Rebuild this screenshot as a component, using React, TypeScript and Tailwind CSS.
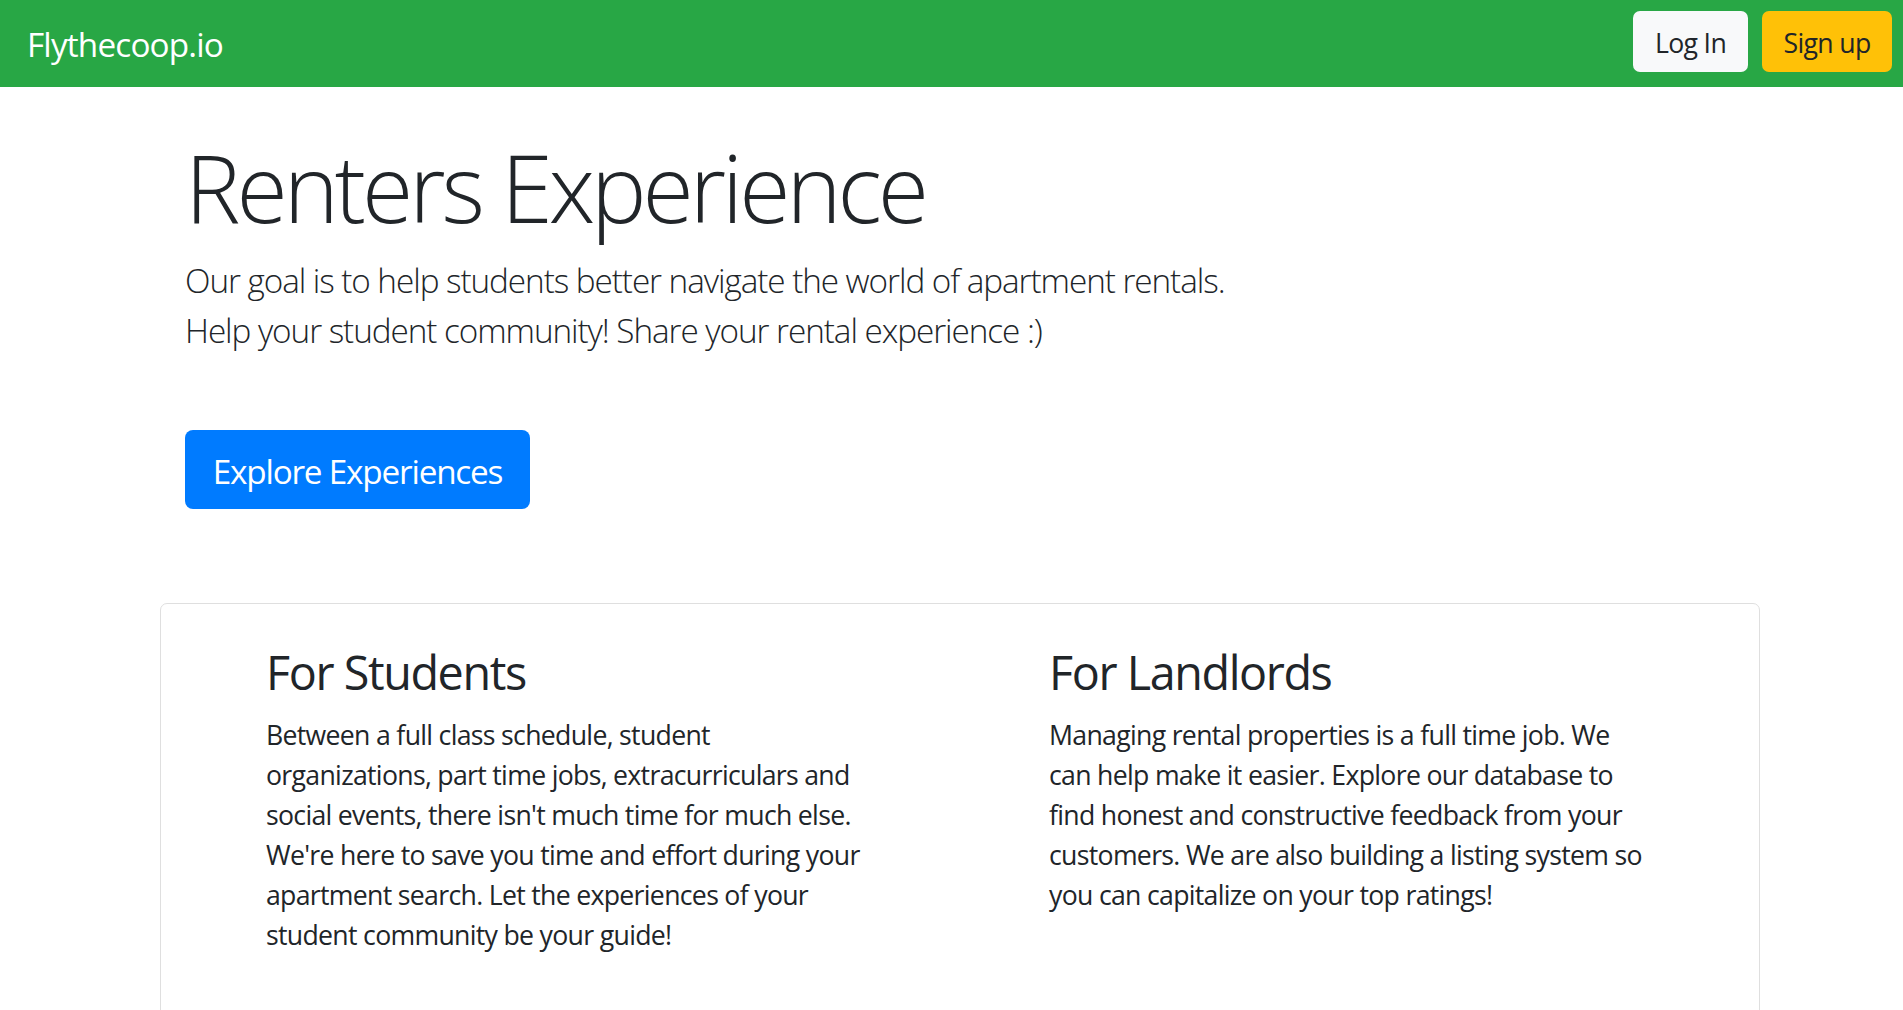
import React from 'react'

// Card copy, one entry per rendered line so wrapping matches the screenshot
const studentLines = [
  'Between a full class schedule, student',
  'organizations, part time jobs, extracurriculars and',
  "social events, there isn't much time for much else.",
  "We're here to save you time and effort during your",
  'apartment search. Let the experiences of your',
  'student community be your guide!',
]

const landlordLines = [
  'Managing rental properties is a full time job. We',
  'can help make it easier. Explore our database to',
  'find honest and constructive feedback from your',
  'customers. We are also building a listing system so',
  'you can capitalize on your top ratings!',
]

function Navbar() {
  return (
    <nav className="flex h-[87px] items-start justify-between bg-[#28a745] pl-[27px] pr-[11px]">
      <a href="#" className="self-center text-[33.3px] leading-[50px] tracking-[-0.025em] text-white">
        Flythecoop.io
      </a>
      <div className="flex gap-[14px] pt-[11px]">
        <button className="flex h-[61px] w-[115px] items-center justify-center rounded-[7px] bg-[#f8f9fa] pt-[3px] text-[26.67px] leading-[40px] tracking-[-0.025em] text-[#212529]">
          Log In
        </button>
        <button className="flex h-[61px] w-[130px] items-center justify-center rounded-[7px] bg-[#ffc107] pt-[3px] text-[26.67px] leading-[40px] tracking-[-0.025em] text-[#212529]">
          Sign up
        </button>
      </div>
    </nav>
  )
}

function InfoColumn({ title, lines }: { title: string; lines: string[] }) {
  return (
    <div>
      <h3 className="text-[46.7px] font-normal leading-[56px] tracking-[-0.03em]">{title}</h3>
      <p className="mt-[15px] text-[26.67px] leading-[40px] tracking-[-0.026em]">
        {lines.map((line, i) => (
          <span key={i} className="block whitespace-nowrap">
            {line}
          </span>
        ))}
      </p>
    </div>
  )
}

export default function App() {
  return (
    <div className="h-screen overflow-hidden bg-white font-['Open_Sans',sans-serif] text-[#212529]">
      <Navbar />

      <section className="ml-[185px] pt-[44px]">
        <h1 className="text-[93.3px] font-light leading-[112px] tracking-[-0.043em]">Renters Experience</h1>
        <div className="mt-[12px] text-[33.3px] font-light leading-[50px] tracking-[-0.032em]">
          <p>Our goal is to help students better navigate the world of apartment rentals.</p>
          <p>Help your student community! Share your rental experience :)</p>
        </div>
        <button className="mt-[75px] flex h-[79px] w-[345px] items-center justify-center rounded-[8px] bg-[#007bff] pt-[2px] text-[33.3px] leading-[50px] tracking-[-0.036em] text-white">
          Explore Experiences
        </button>
      </section>

      <div className="ml-[160px] mt-[94px] w-[1600px] rounded-[7px] border border-[#dfdfdf] pb-[120px] pl-[105px] pt-[40px]">
        <div className="grid grid-cols-[783px_auto]">
          <InfoColumn title="For Students" lines={studentLines} />
          <InfoColumn title="For Landlords" lines={landlordLines} />
        </div>
      </div>
    </div>
  )
}
